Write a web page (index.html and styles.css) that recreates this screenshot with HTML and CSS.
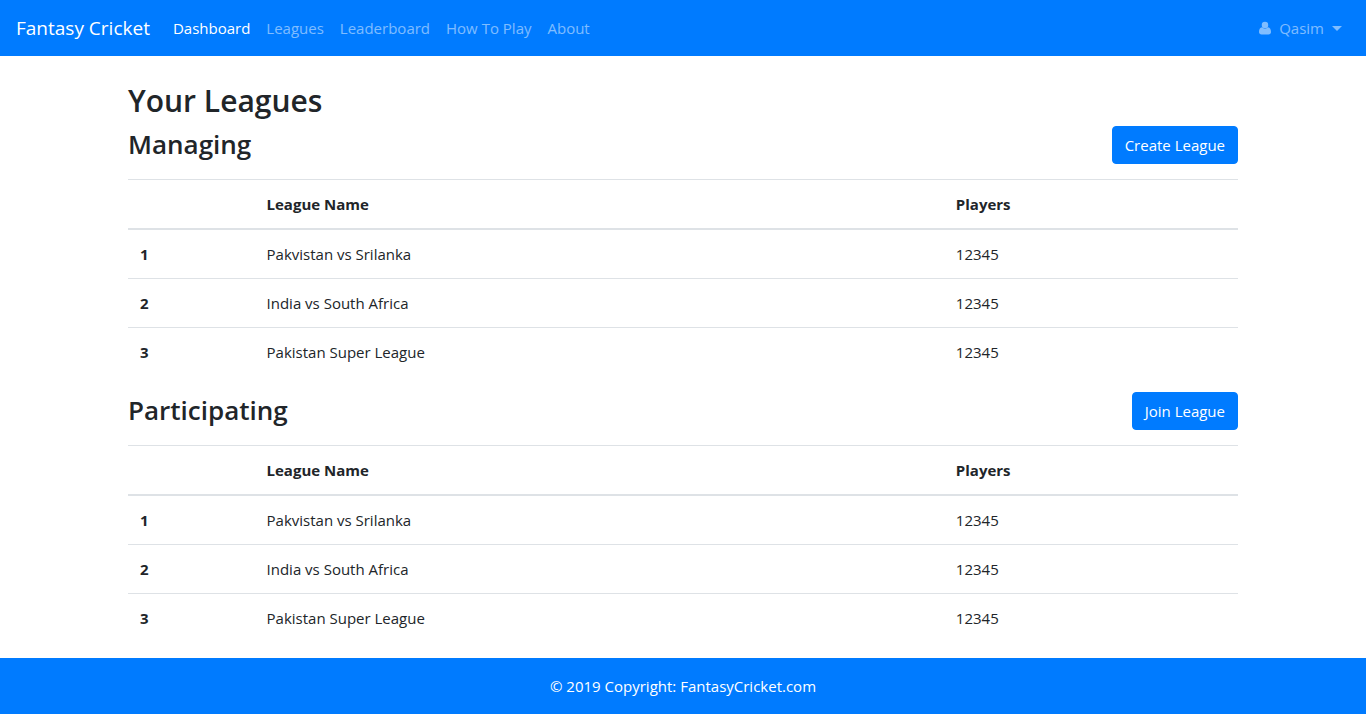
FILE: index.html
```html
<!DOCTYPE html>
<html lang="en">
<head>
<meta charset="utf-8">
<meta name="viewport" content="width=device-width, initial-scale=1">
<title>Fantasy Cricket</title>
<link rel="stylesheet" href="styles.css">
</head>
<body>
<nav class="navbar">
  <a class="brand" href="#">Fantasy Cricket</a>
  <ul class="nav-links">
    <li><a class="nav-link active" href="#">Dashboard</a></li>
    <li><a class="nav-link" href="#">Leagues</a></li>
    <li><a class="nav-link" href="#">Leaderboard</a></li>
    <li><a class="nav-link" href="#">How To Play</a></li>
    <li><a class="nav-link" href="#">About</a></li>
  </ul>
  <a class="nav-link user" href="#">
    <svg class="user-icon" viewBox="0 0 13 14" aria-hidden="true"><circle cx="6.500" cy="3.700" r="3.500"/><path d="M3.300 6.300C1 6.500 0 8.800 0 11.300C0 12.900 1.100 14 2.700 14H10.300C11.900 14 13 12.900 13 11.300C13 8.800 12 6.500 9.700 6.300C8 8.300 5 8.300 3.300 6.300Z"/></svg>
    <span>Qasim</span>
    <span class="caret"></span>
  </a>
</nav>
<main class="container">
  <h2 class="title">Your Leagues</h2>
  <section class="leagues">
    <header class="section-head">
      <h3 class="subtitle">Managing</h3>
      <button class="btn" type="button">Create League</button>
    </header>
    <table class="table">
      <thead><tr><th class="col-num"></th><th class="col-name" scope="col">League Name</th><th scope="col">Players</th></tr></thead>
      <tbody>
        <tr><th scope="row">1</th><td>Pakvistan vs Srilanka</td><td>12345</td></tr>
        <tr><th scope="row">2</th><td>India vs South Africa</td><td>12345</td></tr>
        <tr><th scope="row">3</th><td>Pakistan Super League</td><td>12345</td></tr>
      </tbody>
    </table>
  </section>
  <section class="leagues">
    <header class="section-head">
      <h3 class="subtitle">Participating</h3>
      <button class="btn" type="button">Join League</button>
    </header>
    <table class="table">
      <thead><tr><th class="col-num"></th><th class="col-name" scope="col">League Name</th><th scope="col">Players</th></tr></thead>
      <tbody>
        <tr><th scope="row">1</th><td>Pakvistan vs Srilanka</td><td>12345</td></tr>
        <tr><th scope="row">2</th><td>India vs South Africa</td><td>12345</td></tr>
        <tr><th scope="row">3</th><td>Pakistan Super League</td><td>12345</td></tr>
      </tbody>
    </table>
  </section>
</main>
<footer class="footer">© 2019 Copyright: <a class="footer-link" href="#">FantasyCricket.com</a></footer>
</body>
</html>
```
FILE: styles.css
```css
*, *::before, *::after { box-sizing: border-box; }

body {
  margin: 0;
  font-family: "Segoe UI", "Open Sans", "Noto Sans", sans-serif;
  font-size: 15px;
  line-height: 24px;
  color: #212529;
  background: #fff;
}

a { text-decoration: none; }

.navbar {
  display: flex;
  align-items: center;
  min-height: 56px;
  padding: 8px 16px;
  background: #007bff;
}

.brand {
  margin-right: 15px;
  font-size: 19px;
  line-height: 32px;
  color: #fff;
}

.nav-links {
  display: flex;
  margin: 0;
  padding: 0;
  list-style: none;
}

.nav-link {
  display: block;
  padding: 8px;
  color: rgba(255, 255, 255, 0.5);
}

.nav-link.active { color: #fff; }

.user {
  display: flex;
  align-items: center;
  gap: 8px;
  margin-left: auto;
}

.user-icon {
  width: 12px;
  height: 14px;
  fill: currentColor;
}

.caret {
  border-top: 5px solid;
  border-right: 5px solid transparent;
  border-left: 5px solid transparent;
}

.container {
  max-width: 1140px;
  margin: 0 auto;
  padding: 24px 15px 0;
}

.title,
.subtitle {
  margin: 0;
  font-weight: 600;
}

.title {
  margin-bottom: 4px;
  font-size: 30px;
  line-height: 42px;
}

.subtitle {
  font-size: 26px;
  line-height: 36px;
}

.section-head {
  display: flex;
  justify-content: space-between;
  align-items: flex-start;
  margin-bottom: 15px;
}

.btn {
  padding: 6px 12px;
  border: 1px solid #007bff;
  border-radius: 4px;
  font: inherit;
  color: #fff;
  background: #007bff;
}

.table {
  width: 100%;
  margin-bottom: 16px;
  border-collapse: separate;
  border-spacing: 0;
  table-layout: fixed;
}

.table th,
.table td {
  padding: 12px;
  border-top: 1px solid #dee2e6;
  text-align: left;
}

.table th { font-weight: 700; }

.table thead th { border-bottom: 2px solid #dee2e6; }

.table tbody tr:first-child > * { border-top: 0; }

.col-num { width: 11.400%; }
.col-name { width: 62.100%; }

.footer {
  padding: 16px;
  text-align: center;
  color: #fff;
  background: #007bff;
}

.footer-link { color: #fff; }
```
